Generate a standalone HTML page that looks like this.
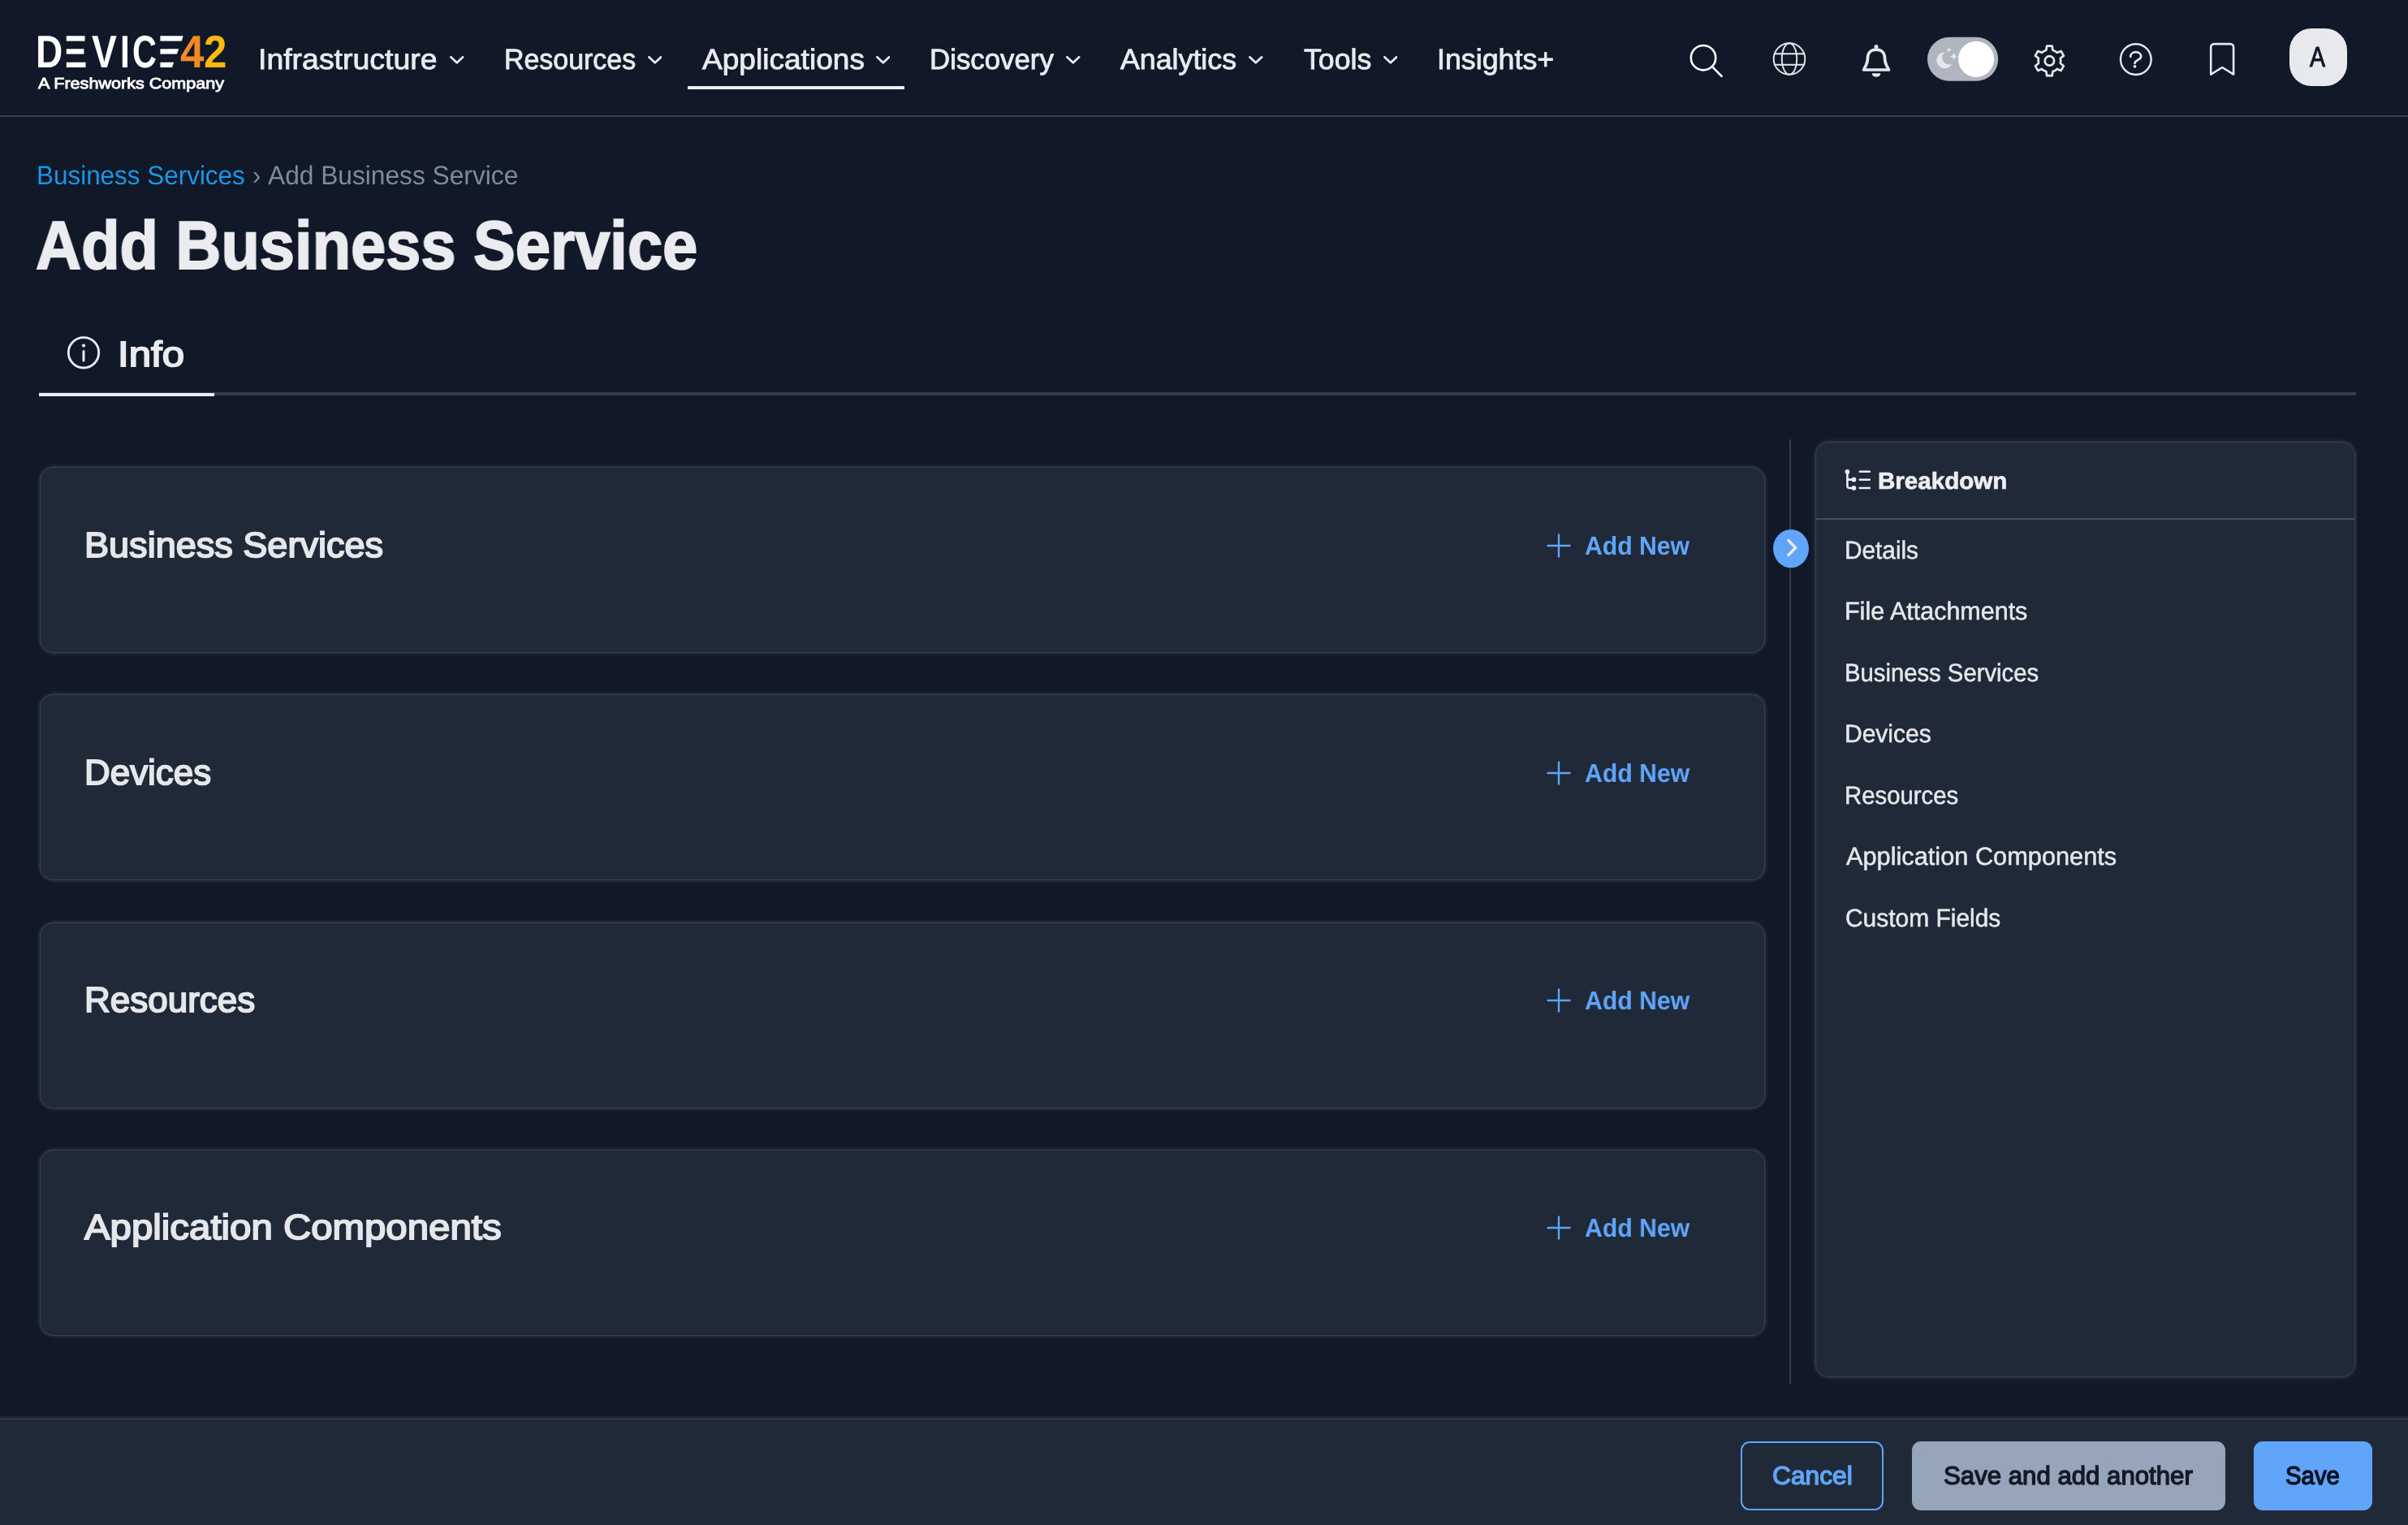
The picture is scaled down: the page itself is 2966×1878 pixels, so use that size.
<!DOCTYPE html>
<html lang="en"><head><meta charset="utf-8"><title>Add Business Service | Device42</title>
<style>
html,body{margin:0;padding:0}
body{width:2966px;height:1878px;overflow:hidden;background:#111827;position:relative;font-family:"Liberation Sans",Arial,sans-serif;color:#e5e7eb;text-rendering:geometricPrecision}
#page{position:absolute;left:0;top:0;width:2966px;height:1878px;will-change:transform}
@media (min-resolution:1.5dppx){html{zoom:.5}}
.a{position:absolute;display:block}
.t i{font-style:normal}
.lg i{display:inline-block;transform-origin:0 0}
.t{position:absolute;display:block;margin:0;padding:0;text-decoration:none;white-space:nowrap;line-height:1em;height:1em;transform-origin:0 0;font-weight:400;letter-spacing:0}
.card{position:absolute;left:49px;width:2125px;height:229px;box-sizing:border-box;background:#1f2937;border:1px solid #3b404c;border-radius:17px;box-shadow:0 0 5.5px rgba(255,255,255,.2)}
.btn{position:absolute;top:1775px;height:85px;box-sizing:border-box;border-radius:11px;margin:0;padding:0;border:0;background:none;font:inherit;color:inherit;appearance:none;-webkit-appearance:none;overflow:visible;text-align:left;display:block}
</style></head><body>
<div id="page">

<header>
<div class="a" style="left:0;top:0;width:2966px;height:142px;background:#111827"></div>
<div class="a" style="left:0;top:142px;width:2966px;height:2px;background:#373c4b"></div>
<span id="logo"><span class="t lg" style="left:43.54px;top:36px;font-size:56.25px;font-weight:700"><i style="transform:scaleX(0.8194);margin-right:-5.41px;color:#ffffff">D</i><i style="transform:scaleX(0.7485);margin-right:-3.47px;color:#ffffff">E</i><i style="transform:scaleX(0.8211);margin-right:-2.38px;color:#ffffff">V</i><i style="transform:scaleX(0.7556);margin-right:-1.04px;color:#ffffff">I</i><i style="transform:scaleX(0.7368);margin-right:-8.90px;color:#ffffff">C</i><i style="transform:scaleX(0.9182);margin-right:0.00px;color:#ffffff">E</i></span><svg class="a" style="left:40px;top:40px" width="250" height="50" viewBox="40 40 250 50" fill="#111827"><rect x="79.50" y="50.56" width="8.64" height="9.72"/><rect x="79.50" y="66.55" width="8.64" height="10.19"/><rect x="195.50" y="50.56" width="10.08" height="9.72"/><rect x="195.50" y="66.55" width="10.08" height="10.19"/><path d="M226.4 43 L240 43 L240 84 L211.6 84 Z"/></svg><span class="t lg" style="left:221.80px;top:36px;font-size:56.25px;font-weight:700"><i style="transform:scaleX(0.9419);margin-right:-2.29px;color:#f08a24">4</i><i style="transform:scaleX(0.9069);margin-right:0.00px;color:#fdb813">2</i></span></span>
<span id="tag" class="t" style="left:47.06px;top:95px;font-size:18.9px;color:#ffffff;transform:scaleX(1.1428);-webkit-text-stroke:0.8px #ffffff;">A Freshworks Company</span>
<nav>
<a id="nav0" class="t" style="left:318.48px;top:56px;font-size:35.39px;color:#e9ebef;transform:scaleX(1.0580);-webkit-text-stroke:0.85px #e9ebef;">Infrastructure</a>
<a id="nav1" class="t" style="left:621.49px;top:56px;font-size:35.39px;color:#e9ebef;transform:scaleX(0.9591);-webkit-text-stroke:0.85px #e9ebef;">Resources</a>
<a id="nav2" class="t" style="left:864.55px;top:56px;font-size:35.39px;color:#e9ebef;transform:scaleX(1.0482);-webkit-text-stroke:0.85px #e9ebef;">Applications</a>
<a id="nav3" class="t" style="left:1145.45px;top:56px;font-size:35.39px;color:#e9ebef;transform:scaleX(0.9842);-webkit-text-stroke:0.85px #e9ebef;">Discovery</a>
<a id="nav4" class="t" style="left:1380.43px;top:56px;font-size:35.39px;color:#e9ebef;transform:scaleX(1.0105);-webkit-text-stroke:0.85px #e9ebef;">Analytics</a>
<a id="nav5" class="t" style="left:1605.83px;top:56px;font-size:35.39px;color:#e9ebef;transform:scaleX(1.0092);-webkit-text-stroke:0.85px #e9ebef;">Tools</a>
<a id="nav6" class="t" style="left:1769.80px;top:56px;font-size:35.39px;color:#e9ebef;transform:scaleX(1.0111);-webkit-text-stroke:0.85px #e9ebef;">Insights+</a>
<svg class="a" style="left:554.1px;top:68.6px" width="17.5" height="10" viewBox="0 0 17.5 10"><path d="M1.35 1.35 L8.75 8.30 L16.15 1.35" fill="none" stroke="#e9ebef" stroke-width="2.7" stroke-linecap="round" stroke-linejoin="round"/></svg>
<svg class="a" style="left:797.9px;top:68.6px" width="17.5" height="10" viewBox="0 0 17.5 10"><path d="M1.35 1.35 L8.75 8.30 L16.15 1.35" fill="none" stroke="#e9ebef" stroke-width="2.7" stroke-linecap="round" stroke-linejoin="round"/></svg>
<svg class="a" style="left:1078.7px;top:68.6px" width="17.5" height="10" viewBox="0 0 17.5 10"><path d="M1.35 1.35 L8.75 8.30 L16.15 1.35" fill="none" stroke="#e9ebef" stroke-width="2.7" stroke-linecap="round" stroke-linejoin="round"/></svg>
<svg class="a" style="left:1313.4px;top:68.6px" width="17.5" height="10" viewBox="0 0 17.5 10"><path d="M1.35 1.35 L8.75 8.30 L16.15 1.35" fill="none" stroke="#e9ebef" stroke-width="2.7" stroke-linecap="round" stroke-linejoin="round"/></svg>
<svg class="a" style="left:1538.3px;top:68.6px" width="17.5" height="10" viewBox="0 0 17.5 10"><path d="M1.35 1.35 L8.75 8.30 L16.15 1.35" fill="none" stroke="#e9ebef" stroke-width="2.7" stroke-linecap="round" stroke-linejoin="round"/></svg>
<svg class="a" style="left:1703.9px;top:68.6px" width="17.5" height="10" viewBox="0 0 17.5 10"><path d="M1.35 1.35 L8.75 8.30 L16.15 1.35" fill="none" stroke="#e9ebef" stroke-width="2.7" stroke-linecap="round" stroke-linejoin="round"/></svg>
<div class="a" style="left:847px;top:106px;width:267px;height:4px;background:#ebecf0"></div>
</nav>
<svg class="a" style="left:2060px;top:30px" width="880" height="90" viewBox="2060 30 880 90" fill="none" stroke-linecap="round" stroke-linejoin="round">
<g stroke="#ffffff" stroke-width="2.6"><circle cx="2098" cy="71.2" r="15.2"/><path d="M2109.2 82.4 L2120.6 93.8"/></g>
<g stroke="#e5e7eb" stroke-width="1.9"><circle cx="2204" cy="72.5" r="19.3"/><ellipse cx="2204" cy="72.5" rx="9.2" ry="19.3"/><path d="M2185.7 66.3H2222.3M2185.7 79.7H2222.3"/></g>
<g stroke="#e5e7eb" stroke-width="3.7"><path d="M2295.5 86 L2298.7 79.8 C2300 77 2300.5 74.5 2300.5 71.5 C2300.5 64.800 2304.800 61.2 2311 61.2 C2317.2 61.2 2321.5 64.800 2321.5 71.5 C2321.5 74.5 2322 77 2323.300 79.800 L2326.5 86 Z"/></g>
<circle cx="2311" cy="57.5" r="2.5" fill="#e5e7eb"/><path d="M2305.6 90.2 H2316.4 A5.4 4.7 0 0 1 2305.6 90.2 Z" fill="#e5e7eb"/>
<rect x="2374" y="45.800" width="87.2" height="54" rx="27" fill="#afb4be"/>
<defs><pattern id="dots" width="6.4" height="6.4" patternUnits="userSpaceOnUse"><circle cx="1.2" cy="1.2" r=".55" fill="#d3d6dc"/><circle cx="4.4" cy="4.4" r=".55" fill="#d3d6dc"/></pattern></defs><rect x="2374" y="45.800" width="87.2" height="54" rx="27" fill="url(#dots)" opacity=".55"/>
<circle cx="2434.1" cy="72.9" r="22.1" fill="#ffffff"/>
<path d="M2395.51 64.20 A10 10 0 1 0 2404.27 78.81 A8.6 8.6 0 0 1 2395.51 64.20 Z" fill="#e5e7eb"/>
<path d="M2400.50 57.80 Q2400.80 61.20 2404.20 61.50 Q2400.80 61.80 2400.50 65.20 Q2400.20 61.80 2396.80 61.50 Q2400.20 61.20 2400.50 57.80 Z" fill="#e5e7eb"/>
<path d="M2406.50 64.20 Q2406.92 68.98 2411.70 69.40 Q2406.92 69.82 2406.50 74.60 Q2406.08 69.82 2401.30 69.40 Q2406.08 68.98 2406.50 64.20 Z" fill="#e5e7eb"/>
<g stroke="#e5e7eb" stroke-width="2.7"><circle cx="2524.4" cy="74.9" r="5.7"/><path d="M2520.41 61.69 L2521.11 56.59 L2527.69 56.59 L2528.39 61.69 A13.80 13.80 0 0 1 2533.85 64.84 L2533.85 64.84 L2538.61 62.89 L2541.90 68.60 L2537.84 71.75 A13.80 13.80 0 0 1 2537.84 78.05 L2537.84 78.05 L2541.90 81.20 L2538.61 86.91 L2533.85 84.96 A13.80 13.80 0 0 1 2528.39 88.11 L2528.39 88.11 L2527.69 93.21 L2521.11 93.21 L2520.41 88.11 A13.80 13.80 0 0 1 2514.95 84.96 L2514.95 84.96 L2510.19 86.91 L2506.90 81.20 L2510.96 78.05 A13.80 13.80 0 0 1 2510.96 71.75 L2510.96 71.75 L2506.90 68.60 L2510.19 62.89 L2514.95 64.84 A13.80 13.80 0 0 1 2520.41 61.69 Z"/></g>
<g stroke="#e5e7eb" stroke-width="2.4"><circle cx="2630.8" cy="73.1" r="18.85"/><path d="M2624.2 69.7 C2624.2 66.3 2627 64.2 2630.7 64.2 C2634.5 64.2 2637.200 66.4 2637.200 69.5 C2637.200 74.2 2629.5 73.5 2629.5 77.9" stroke-width="2.7"/></g>
<circle cx="2629.5" cy="81.8" r="1.9" fill="#e5e7eb"/>
<path d="M2723.2 91.6 V58.1 A4 4 0 0 1 2727.2 54.1 H2747.1 A4 4 0 0 1 2751.100 58.1 V91.6 L2737.150 83 Z" stroke="#e5e7eb" stroke-width="2.6"/>
</svg>
<div class="a" style="left:2819.8px;top:34.7px;width:71.3px;height:71.5px;border-radius:27px;background:#e8e9ed"></div>
<span id="avA" class="t" style="left:2844.51px;top:54px;font-size:34.74px;color:#111827;transform:scaleX(0.8200);-webkit-text-stroke:1px #111827;">A</span>
</header>
<main>
<a id="bc1" class="t" style="left:44.77px;top:200px;font-size:32.56px;color:#1a96e6;transform:scaleX(0.9657);">Business Services</a>
<span id="bc2" class="t" style="left:311.36px;top:200px;font-size:32.56px;color:#7d8b99;transform:scaleX(0.9444);">›</span>
<span id="bc3" class="t" style="left:330.20px;top:200px;font-size:32.56px;color:#7d8b99;transform:scaleX(0.9737);">Add Business Service</span>
<h1 id="title" class="t" style="left:44.03px;top:260px;font-size:84.01px;color:#ebecf0;transform:scaleX(0.9238);font-weight:700;-webkit-text-stroke:2px #ebecf0;">Add Business Service</h1>
<div class="a" style="left:48px;top:483px;width:2854px;height:4px;background:#373c4b"></div>
<div class="a" style="left:48px;top:484px;width:216px;height:4px;background:#ebecf0"></div>
<svg class="a" style="left:80px;top:411px" width="46" height="46" viewBox="80 411 46 46" fill="none"><circle cx="103" cy="434.3" r="18.7" stroke="#e9ebef" stroke-width="2.9"/><path d="M103 432.500V444" stroke="#e9ebef" stroke-width="3" stroke-linecap="round"/><circle cx="103" cy="425.6" r="2.1" fill="#e9ebef"/></svg>
<span id="info" class="t" style="left:144.60px;top:416px;font-size:43.6px;color:#e9ebef;transform:scaleX(1.1275);-webkit-text-stroke:1.8px #e9ebef;">Info</span>
<section class="card" style="top:575px"></section>
<h2 id="c1" class="t" style="left:104.43px;top:651px;font-size:43.6px;color:#e5e7eb;transform:scaleX(1.0334);-webkit-text-stroke:1.8px #e5e7eb;">Business Services</h2>
<svg class="a" style="left:1905px;top:657.2px" width="30" height="30" viewBox="0 0 30 30"><path d="M15 1.5V28.5M1.5 15H28.5" stroke="#60a5fa" stroke-width="2.4" stroke-linecap="round" fill="none"/></svg>
<span id="an0" class="t" style="left:1951.60px;top:657px;font-size:31.83px;color:#60a5fa;transform:scaleX(0.9480);font-weight:700;">Add New</span>
<section class="card" style="top:855px"></section>
<h2 id="c2" class="t" style="left:104.48px;top:931px;font-size:43.6px;color:#e5e7eb;transform:scaleX(1.0075);-webkit-text-stroke:1.8px #e5e7eb;">Devices</h2>
<svg class="a" style="left:1905px;top:937.2px" width="30" height="30" viewBox="0 0 30 30"><path d="M15 1.5V28.5M1.5 15H28.5" stroke="#60a5fa" stroke-width="2.4" stroke-linecap="round" fill="none"/></svg>
<span id="an1" class="t" style="left:1951.60px;top:937px;font-size:31.83px;color:#60a5fa;transform:scaleX(0.9480);font-weight:700;">Add New</span>
<section class="card" style="top:1136px"></section>
<h2 id="c3" class="t" style="left:104.38px;top:1211px;font-size:43.6px;color:#e5e7eb;transform:scaleX(1.0089);-webkit-text-stroke:1.8px #e5e7eb;">Resources</h2>
<svg class="a" style="left:1905px;top:1217.2px" width="30" height="30" viewBox="0 0 30 30"><path d="M15 1.5V28.5M1.5 15H28.5" stroke="#60a5fa" stroke-width="2.4" stroke-linecap="round" fill="none"/></svg>
<span id="an2" class="t" style="left:1951.60px;top:1217px;font-size:31.83px;color:#60a5fa;transform:scaleX(0.9480);font-weight:700;">Add New</span>
<section class="card" style="top:1416px"></section>
<h2 id="c4" class="t" style="left:103.98px;top:1491px;font-size:43.6px;color:#e5e7eb;transform:scaleX(1.0869);-webkit-text-stroke:1.8px #e5e7eb;">Application Components</h2>
<svg class="a" style="left:1905px;top:1497.2px" width="30" height="30" viewBox="0 0 30 30"><path d="M15 1.5V28.5M1.5 15H28.5" stroke="#60a5fa" stroke-width="2.4" stroke-linecap="round" fill="none"/></svg>
<span id="an3" class="t" style="left:1951.60px;top:1497px;font-size:31.83px;color:#60a5fa;transform:scaleX(0.9480);font-weight:700;">Add New</span>
<div class="a" style="left:2204px;top:541px;width:2px;height:1163px;background:#373c4b"></div>
<svg class="a" style="left:2184px;top:651.800px" width="44" height="47.2" viewBox="0 0 44 47.2"><ellipse cx="22" cy="23.6" rx="22" ry="23.6" fill="#60a5fa"/><path d="M18.9 13.5 L27.7 22.6 L18.9 31.600" fill="none" stroke="#e8eaee" stroke-width="3.5" stroke-linecap="round" stroke-linejoin="round"/></svg>
<aside class="card" style="left:2236px;top:544px;width:665px;height:1152px"></aside>
<div class="a" style="left:2237px;top:638px;width:663px;height:2px;background:#464e5c"></div>
<svg class="a" style="left:2270px;top:576px" width="38" height="32" viewBox="2270 576 38 32" fill="none" stroke="#eceef2" stroke-width="2.6" stroke-linecap="round" stroke-linejoin="round">
<path d="M2275.4 583.500V598.600A2.400 2.400 0 0 0 2277.8 601H2281M2275.4 590.600H2281M2290.800 580.800H2302.800M2290.800 590.700H2302.800M2290.800 601H2302.800"/>
<rect x="2273.4" y="579" width="4" height="4" rx="1.2" fill="#eceef2" stroke-width="1.600"/><rect x="2281.400" y="588.600" width="4" height="4" rx="1.2" fill="#eceef2" stroke-width="1.600"/><rect x="2281.400" y="599" width="4" height="4" rx="1.2" fill="#eceef2" stroke-width="1.600"/></svg>
<h3 id="bd" class="t" style="left:2313.34px;top:579px;font-size:28.92px;color:#eceef2;transform:scaleX(1.0231);font-weight:700;-webkit-text-stroke:0.7px #eceef2;">Breakdown</h3>
<a id="it0" class="t" style="left:2272.32px;top:663px;font-size:30.96px;color:#e5e7eb;transform:scaleX(0.9618);-webkit-text-stroke:0.5px #e5e7eb;">Details</a>
<a id="it1" class="t" style="left:2272.28px;top:738px;font-size:30.96px;color:#e5e7eb;transform:scaleX(0.9849);-webkit-text-stroke:0.5px #e5e7eb;">File Attachments</a>
<a id="it2" class="t" style="left:2272.35px;top:814px;font-size:30.96px;color:#e5e7eb;transform:scaleX(0.9454);-webkit-text-stroke:0.5px #e5e7eb;">Business Services</a>
<a id="it3" class="t" style="left:2272.30px;top:889px;font-size:30.96px;color:#e5e7eb;transform:scaleX(0.9694);-webkit-text-stroke:0.5px #e5e7eb;">Devices</a>
<a id="it4" class="t" style="left:2272.34px;top:965px;font-size:30.96px;color:#e5e7eb;transform:scaleX(0.9474);-webkit-text-stroke:0.5px #e5e7eb;">Resources</a>
<a id="it5" class="t" style="left:2273.65px;top:1040px;font-size:30.96px;color:#e5e7eb;transform:scaleX(0.9930);-webkit-text-stroke:0.5px #e5e7eb;">Application Components</a>
<a id="it6" class="t" style="left:2272.87px;top:1116px;font-size:30.96px;color:#e5e7eb;transform:scaleX(0.9673);-webkit-text-stroke:0.5px #e5e7eb;">Custom Fields</a>
</main>
<footer>
<div class="card" style="left:-40px;top:1747px;width:3046px;height:200px;border-radius:0"></div>
<button type="button" class="btn" style="left:2144px;width:176.2px;border:2px solid #60a5fa"><span id="b1" class="t" style="left:37.00px;top:25px;font-size:31.4px;color:#60a5fa;transform:scaleX(1.0110);-webkit-text-stroke:1.4px #60a5fa;">Cancel</span></button>
<button type="button" class="btn" style="left:2354.8px;width:386.4px;background:#97a5ba"><span id="b2" class="t" style="left:39.70px;top:27px;font-size:31.4px;color:#141a26;transform:scaleX(0.9930);-webkit-text-stroke:1.4px #141a26;">Save and add another</span></button>
<button type="button" class="btn" style="left:2776px;width:146.1px;background:#60a5fa"><span id="b3" class="t" style="left:39.32px;top:27px;font-size:31.4px;color:#0b1220;transform:scaleX(0.9344);-webkit-text-stroke:1.4px #0b1220;">Save</span></button>
</footer>
</div>
</body></html>
